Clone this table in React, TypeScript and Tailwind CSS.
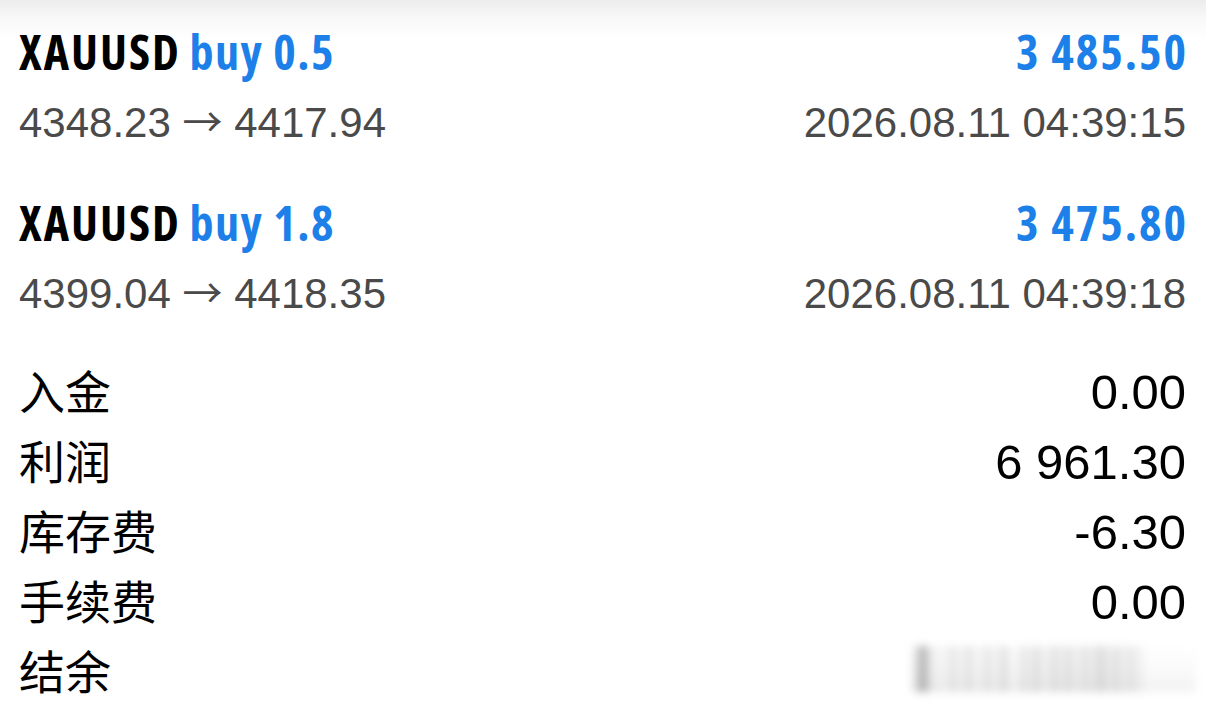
import React from 'react'

const trades = [
    { symbol: 'XAUUSD', side: 'buy', volume: '0.5', profit: '3 485.50', open: '4348.23', close: '4417.94', time: '2026.08.11 04:39:15' },
    { symbol: 'XAUUSD', side: 'buy', volume: '1.8', profit: '3 475.80', open: '4399.04', close: '4418.35', time: '2026.08.11 04:39:18' },
]

const summary = [
    { label: '入金', value: '0.00' },
    { label: '利润', value: '6 961.30' },
    { label: '库存费', value: '-6.30' },
    { label: '手续费', value: '0.00' },
]

// censored balance, just smudgy vertical streaks
const streaks = [
    { w: 6, o: 0.07 }, { w: 10, o: 0.26 }, { w: 8, o: 0.05 }, { w: 14, o: 0.03 }, { w: 6, o: 0.09 },
    { w: 10, o: 0.04 }, { w: 6, o: 0.1 }, { w: 12, o: 0.03 }, { w: 6, o: 0.09 }, { w: 10, o: 0.04 },
    { w: 8, o: 0.1 }, { w: 12, o: 0.02 }, { w: 6, o: 0.09 }, { w: 8, o: 0.05 }, { w: 6, o: 0.12 },
    { w: 10, o: 0.04 }, { w: 8, o: 0.1 }, { w: 6, o: 0.05 }, { w: 8, o: 0.1 }, { w: 10, o: 0.05 },
    { w: 6, o: 0.1 }, { w: 8, o: 0.06 }, { w: 10, o: 0.12 }, { w: 6, o: 0.05 }, { w: 8, o: 0.1 },
    { w: 8, o: 0.05 }, { w: 6, o: 0.09 }, { w: 10, o: 0.04 },
]

const condensed = "font-['Open_Sans',sans-serif] font-bold font-stretch-[75%] tracking-[2px]"
const plain = "font-['Liberation_Sans','Noto_Sans_CJK_SC',sans-serif]"

function TradeRow({ t, first }: { t: typeof trades[number], first?: boolean }) {
    return (
        <div className={first ? '' : 'mt-[55px]'}>
            <div className={`flex justify-between text-[48px] leading-[48px] ${condensed}`}>
                <div>
                    <span className="text-black">{t.symbol}</span>{' '}
                    <span className="text-[#1d80e9] ml-[-2px] tracking-[1.5px]">{t.side} {t.volume}</span>
                </div>
                <span className="text-[#1d80e9] mr-[-2px]">{t.profit}</span>
            </div>
            <div className={`mt-[26px] flex justify-between text-[42px] leading-[42px] text-[#4a4a4a] ${plain}`}>
                <span>
                    {t.open} <span className="font-['Noto_Sans_CJK_SC',sans-serif] text-[40px] leading-[0px]">→</span> {t.close}
                </span>
                <span>{t.time}</span>
            </div>
        </div>
    )
}

export default function App() {
    return (
        <main className="w-[1206px] h-[708px] overflow-hidden bg-[linear-gradient(to_bottom,#ececec_0px,#f8f8f8_18px,#ffffff_40px)] pt-[28px] pl-[19px] pr-[20px]">
            {trades.map((t, i) => <TradeRow key={i} t={t} first={i === 0} />)}

            <div className="mt-[39px]">
                {summary.map((s) => (
                    <div key={s.label} className="flex justify-between items-baseline h-[70px] leading-[70px]">
                        <span className="text-[46px] text-black font-['Noto_Sans_CJK_SC',sans-serif]">{s.label}</span>
                        <span className={`text-[49px] text-black ${plain}`}>{s.value}</span>
                    </div>
                ))}
                <div className="flex justify-between items-center h-[70px]">
                    <span className="text-[46px] leading-[70px] text-black font-['Noto_Sans_CJK_SC',sans-serif]">结余</span>
                    <div className="mr-[-10px] flex h-[46px] w-[284px] items-stretch blur-[4px] bg-[linear-gradient(to_bottom,#ffffff_0%,#f9f9f9_60%,#f2f2f2_100%)]">
                        {streaks.map((s, i) => (
                            <div key={i} className="bg-black" style={{ width: s.w, opacity: s.o }} />
                        ))}
                    </div>
                </div>
            </div>
        </main>
    )
}
